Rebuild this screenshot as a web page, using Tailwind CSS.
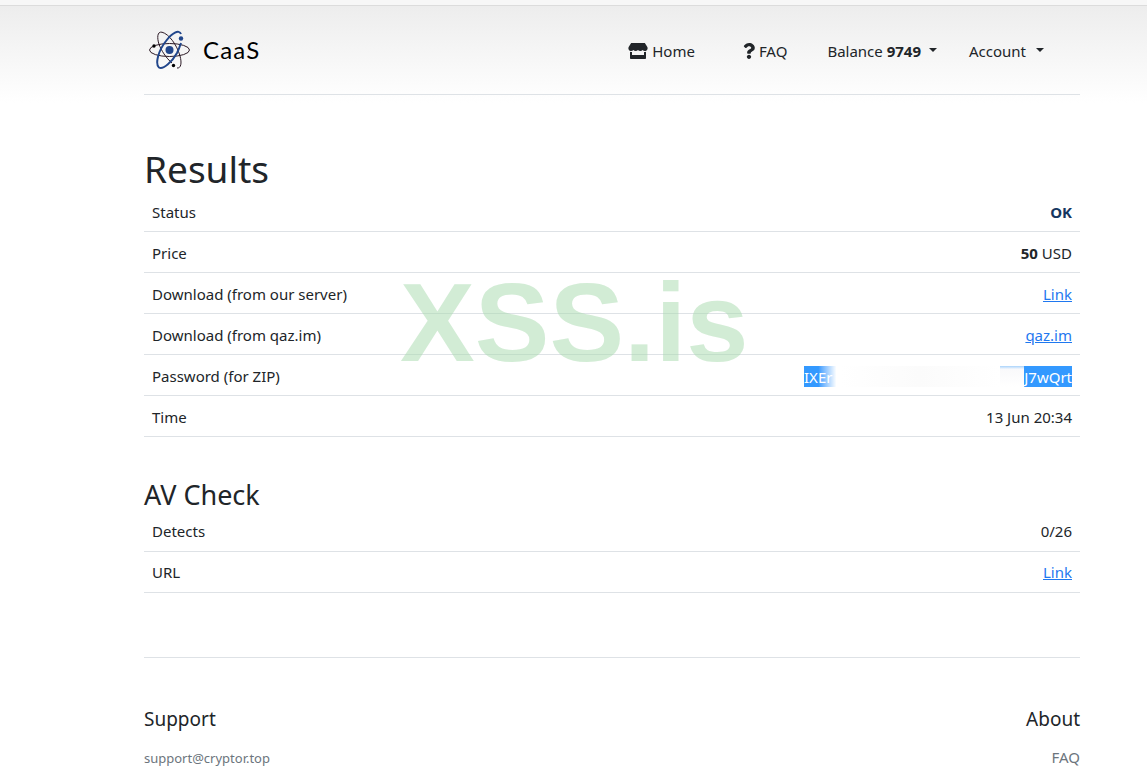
<!DOCTYPE html>
<html lang="en">
<head>
    <meta charset="UTF-8" />
    <meta name="viewport" content="width=device-width, initial-scale=1.0" />
    <title>CaaS - Results</title>
    <script src="https://cdn.jsdelivr.net/npm/@tailwindcss/browser@4"></script>
</head>
<body class="bg-white text-[#212529] text-[15px] leading-6 font-['Noto_Sans',sans-serif] overflow-x-hidden">
    <div class="h-[6px] bg-[#f7f7f7] border-b border-[#dcdcdc]"></div>
    <div class="bg-linear-to-b from-[#ededed] to-white pl-36 pr-[67px] pb-2">
        <header class="h-[89px] flex items-center justify-between border-b border-[#dee2e6]">
            <a href="#" class="flex items-center gap-3 pl-1 text-black">
                <svg class="w-[43px] h-[40px]" viewBox="0 0 43 40" fill="none">
                    <g stroke="#2c1a26" stroke-width="1">
                        <ellipse cx="21.5" cy="20" rx="20" ry="6.500" />
                        <path d="M29 38c4 .5 5-5 3-12C29 15 21 4 14 2.200c-5-1-5 6-3 12C13 20 18 28 24 33" />
                    </g>
                    <path d="M33 4C31-1 24 3 18 11C10 21 7 34 11 37.500C15 40 24 32 29 23C31 19 32 16 33 13" stroke="#21468b" stroke-width="2" />
                    <circle cx="21.500" cy="20" r="4" fill="#21468b" />
                    <circle cx="33" cy="8.500" r="2.200" fill="#21468b" />
                    <circle cx="6" cy="16" r="1.700" fill="#000" />
                    <circle cx="25.500" cy="35.500" r="1.700" fill="#000" />
                </svg>
                <span class="font-[Lato,sans-serif] text-2xl tracking-wider">CaaS</span>
            </a>
            <nav class="flex items-center gap-8 pr-9 pt-0.5">
                <a href="#" class="flex items-center gap-1 mr-4">
                    <svg class="w-5 h-4" viewBox="0 0 616 512" fill="currentColor">
                        <path d="M602 118.600 537.100 15C531.300 5.700 521 0 510 0H106C95 0 84.700 5.700 78.900 15L14 118.600c-33.500 53.500-3.800 127.900 58.800 136.400 4.500.6 9.100.9 13.700.9 29.600 0 55.800-13 73.800-33.100 18 20.100 44.300 33.100 73.800 33.100s55.800-13 73.800-33.100c18 20.100 44.300 33.100 73.800 33.100s55.800-13 73.800-33.100c18.100 20.100 44.300 33.100 73.800 33.100 4.700 0 9.200-.3 13.700-.9 62.800-8.400 92.600-82.800 59-136.400zM529.500 288c-10 0-19.900-1.500-29.500-3.800V384H116v-99.800c-9.600 2.200-19.500 3.800-29.500 3.800-6 0-12.100-.4-18-1.200-5.600-.8-11.100-2.100-16.400-3.600V480c0 17.700 14.300 32 32 32h448c17.700 0 32-14.300 32-32V283.200c-5.400 1.600-10.800 2.900-16.400 3.600-6.100.8-12.100 1.200-18.200 1.200z" />
                    </svg>
                    Home
                </a>
                <a href="#" class="flex items-center gap-1 mr-1">
                    <svg class="w-3 h-4" viewBox="0 0 384 512" fill="currentColor">
                        <path d="M202 0C122.500 0 70.500 32.500 29.700 91c-7.400 10.600-5 25 5.300 32.700l43.100 32.700c10.400 7.900 25.100 6 33.300-4.100 25-31.400 43.600-49.400 82.800-49.400 30.800 0 68.800 19.800 68.800 49.600 0 22.600-18.600 34.100-49 51.200-35.400 19.900-82.300 44.600-82.300 106.400V320c0 13.300 10.700 24 24 24h72.500c13.300 0 24-10.700 24-24v-5.800c0-42.900 125.300-44.600 125.300-160.600C377.500 66.300 286.900 0 202 0zm-10 373.500c-38.200 0-69.300 31.100-69.300 69.300S153.800 512 192 512s69.300-31.100 69.300-69.300-31.100-69.200-69.300-69.200z" />
                    </svg>
                    FAQ
                </a>
                <button type="button" class="flex items-center gap-2 pl-1">
                    <span>Balance <b>9749</b></span>
                    <span class="border-x-4 border-t-4 border-x-transparent border-t-[#212529] mb-0.5"></span>
                </button>
                <button type="button" class="flex items-center gap-[10px]">
                    Account
                    <span class="border-x-4 border-t-4 border-x-transparent border-t-[#212529] mb-0.5"></span>
                </button>
            </nav>
        </header>
    </div>

    <main class="relative pl-36 pr-[67px] pt-[44px]">
        <h1 class="text-[37px] leading-[44px]">Results</h1>
        <table class="w-full">
            <tbody>
                <tr class="border-b border-[#dee2e6]">
                    <td class="px-2 pt-[9px] pb-[7px]">Status</td>
                    <td class="px-2 pt-[9px] pb-[7px] text-right font-bold text-[#16365f]">OK</td>
                </tr>
                <tr class="border-b border-[#dee2e6]">
                    <td class="px-2 pt-[9px] pb-[7px]">Price</td>
                    <td class="px-2 pt-[9px] pb-[7px] text-right"><b>50</b> USD</td>
                </tr>
                <tr class="border-b border-[#dee2e6]">
                    <td class="px-2 pt-[9px] pb-[7px]">Download (from our server)</td>
                    <td class="px-2 pt-[9px] pb-[7px] text-right"><a href="#" class="text-[#1f78f0] underline">Link</a></td>
                </tr>
                <tr class="border-b border-[#dee2e6]">
                    <td class="px-2 pt-[9px] pb-[7px]">Download (from qaz.im)</td>
                    <td class="px-2 pt-[9px] pb-[7px] text-right"><a href="#" class="text-[#1f78f0] underline">qaz.im</a></td>
                </tr>
                <tr class="border-b border-[#dee2e6]">
                    <td class="px-2 pt-[9px] pb-[7px]">Password (for ZIP)</td>
                    <td class="px-2 pt-[9px] pb-[7px]">
                        <div class="ml-auto w-[268px] h-[21px] leading-[22px] flex justify-between text-white">
                            <span class="w-9 bg-linear-to-r from-[#3399ff] from-40% to-white to-90%">IXEr</span>
                            <span class="flex-1 bg-linear-to-r from-white via-[#fbfbfb] to-white"></span>
                            <span class="w-6 bg-linear-to-b from-[#a9d3fb] via-[#f9f9fb] via-15% to-white"></span>
                            <span class="bg-[#3399ff]">J7wQrt</span>
                        </div>
                    </td>
                </tr>
                <tr class="border-b border-[#dee2e6]">
                    <td class="px-2 pt-[9px] pb-[7px]">Time</td>
                    <td class="px-2 pt-[9px] pb-[7px] text-right">13 Jun 20:34</td>
                </tr>
            </tbody>
        </table>

        <h2 class="pt-[41px] text-[27px] leading-[34px]">AV Check</h2>
        <table class="w-full">
            <tbody>
                <tr class="border-b border-[#dee2e6]">
                    <td class="px-2 pt-[7px] pb-2">Detects</td>
                    <td class="px-2 pt-[7px] pb-2 text-right">0/26</td>
                </tr>
                <tr class="border-b border-[#dee2e6]">
                    <td class="p-2">URL</td>
                    <td class="p-2 text-right"><a href="#" class="text-[#1f78f0] underline">Link</a></td>
                </tr>
            </tbody>
        </table>

        <!-- watermark -->
        <div class="absolute left-[400px] top-[160px] pointer-events-none select-none font-['Liberation_Sans',sans-serif] font-bold text-[112px] leading-[120px] text-[#a6d9ac]/50">XSS.is</div>
    </main>

    <footer class="ml-36 mr-[67px] mt-16 pt-[47px] pb-2 border-t border-[#dee2e6] flex justify-between">
        <div>
            <h5 class="text-[19px] leading-7 mb-3">Support</h5>
            <a href="#" class="text-[13px] text-[#6c757d]">support@cryptor.top</a>
        </div>
        <div class="text-right">
            <h5 class="text-[19px] leading-7 mb-3">About</h5>
            <a href="#" class="text-[#6c757d]">FAQ</a>
        </div>
    </footer>
</body>
</html>
